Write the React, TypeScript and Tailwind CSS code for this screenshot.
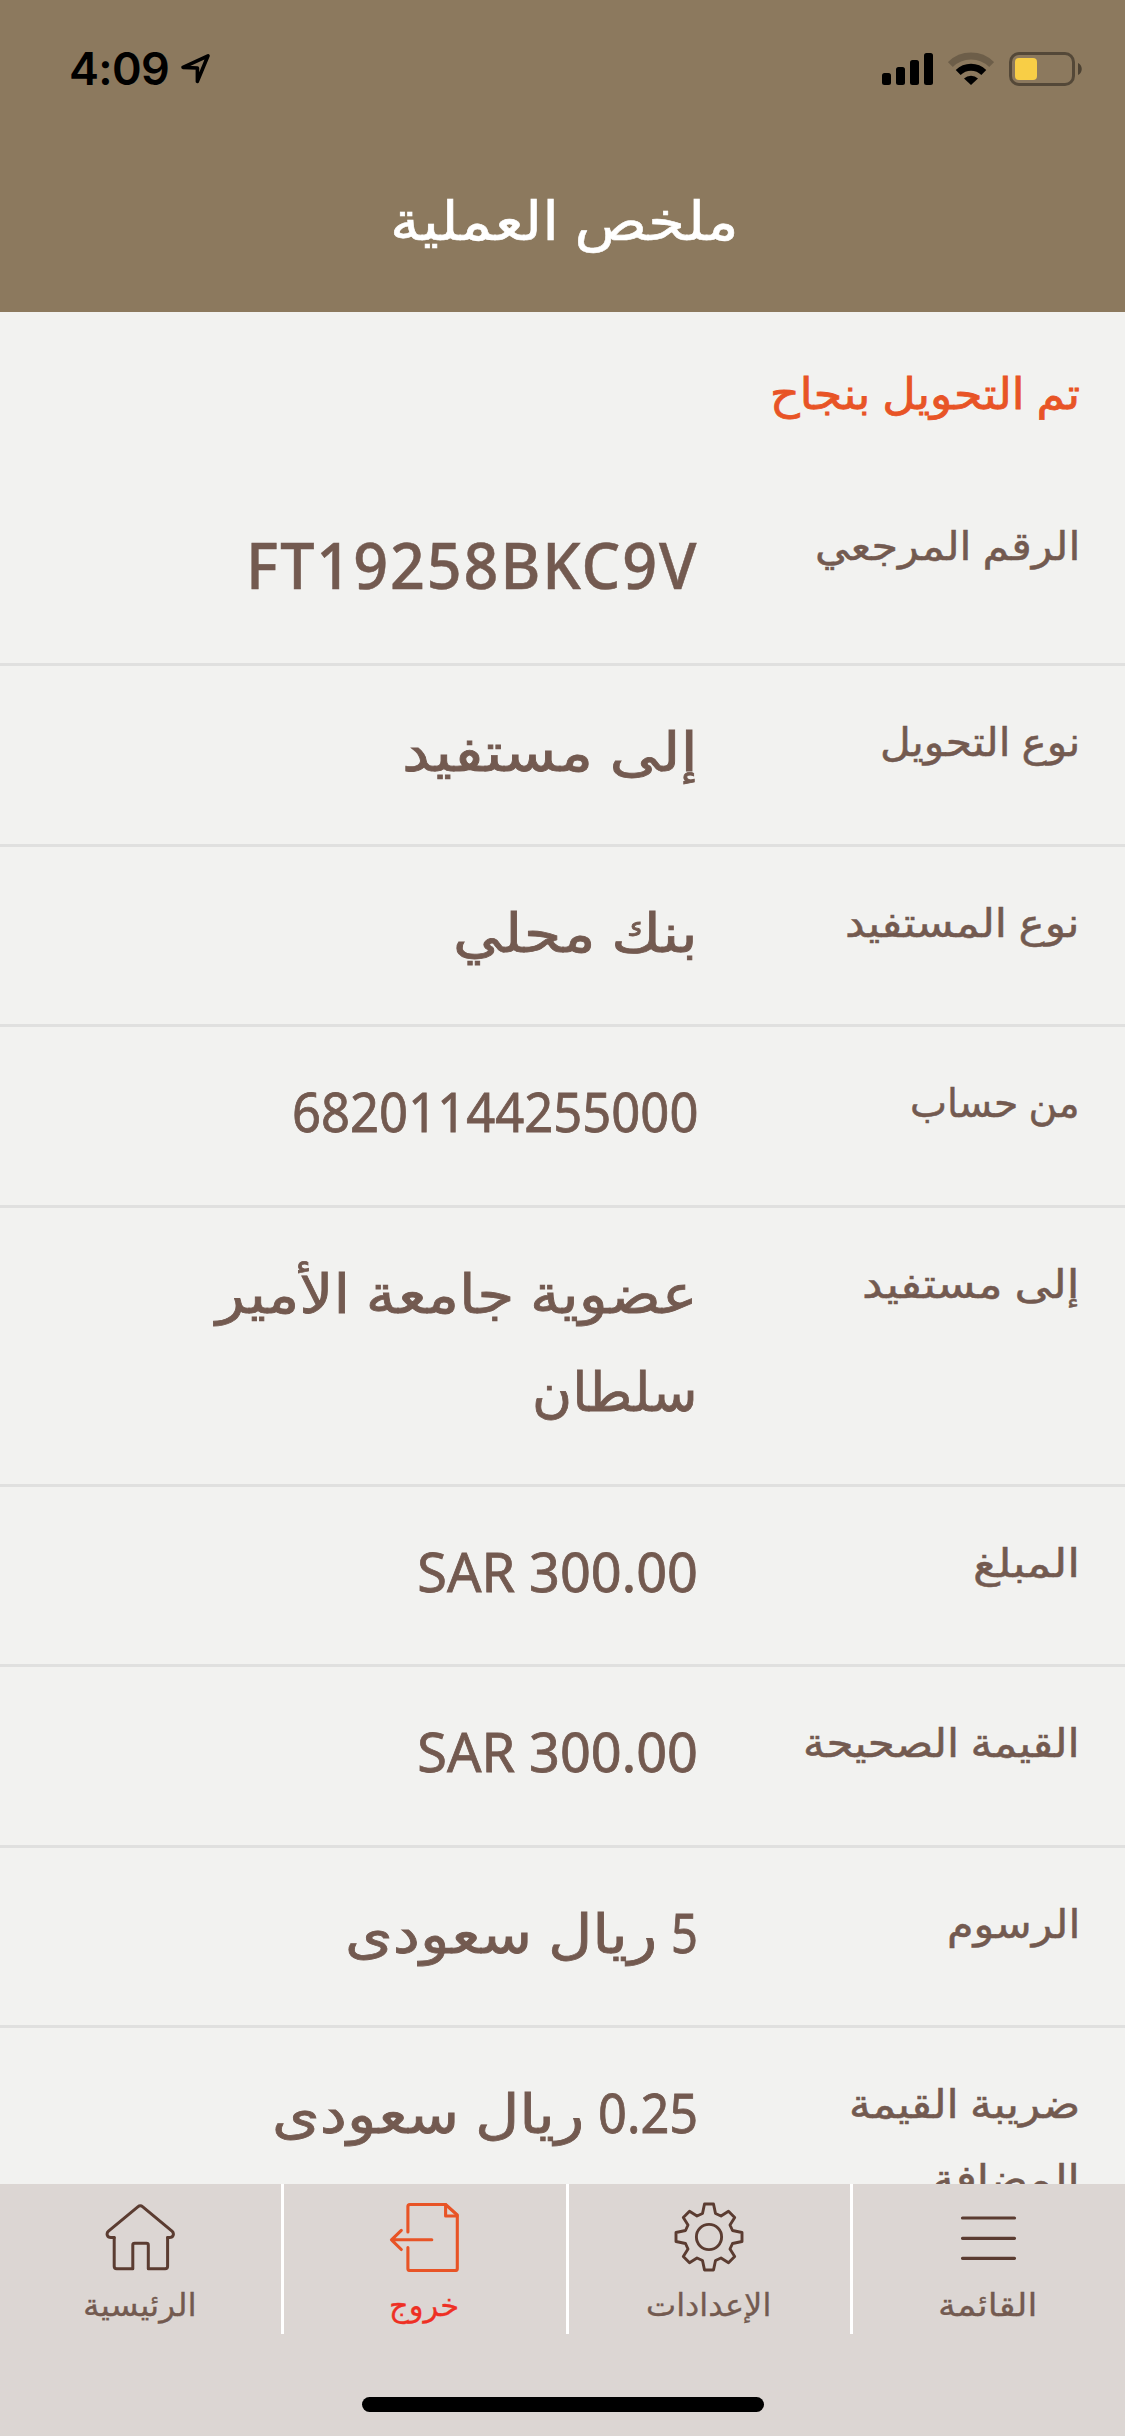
import { useLayoutEffect, useRef, useState } from 'react'
import type { ReactNode } from 'react'
import clsx from 'clsx'

type FitProps = {
  width: number
  className?: string
  children: ReactNode
}

// Condenses or widens one line of text so that it spans exactly `width`
function Fit({ width, className, children }: FitProps) {
  const ref = useRef<HTMLSpanElement>(null)
  const [scale, setScale] = useState(1)

  useLayoutEffect(() => {
    if (ref.current) setScale(width / ref.current.offsetWidth)
  }, [width])

  return (
    <span className={clsx('flex justify-start', className)} style={{ width }}>
      <span
        ref={ref}
        className="block shrink-0 origin-right whitespace-nowrap"
        style={{ transform: `scaleX(${scale})` }}
      >
        {children}
      </span>
    </span>
  )
}

type Line = { text: string; width: number; ltr?: boolean }

type Row = {
  label: Line[]
  value: Line[]
  className: string
  large?: boolean
  inline?: boolean
}

const rows: Row[] = [
  {
    label: [{ text: 'الرقم المرجعي', width: 265 }],
    value: [{ text: 'FT19258BKC9V', width: 452, ltr: true }],
    className: 'h-[196px]',
    large: true,
  },
  {
    label: [{ text: 'نوع التحويل', width: 200 }],
    value: [{ text: 'إلى مستفيد', width: 296 }],
    className: 'h-[181px]',
  },
  {
    label: [{ text: 'نوع المستفيد', width: 235 }],
    value: [{ text: 'بنك محلي', width: 245 }],
    className: 'h-[180px]',
  },
  {
    label: [{ text: 'من حساب', width: 170 }],
    value: [{ text: '68201144255000', width: 406, ltr: true }],
    className: 'h-[181px]',
  },
  {
    label: [{ text: 'إلى مستفيد', width: 218 }],
    value: [
      { text: 'عضوية جامعة الأمير', width: 482 },
      { text: 'سلطان', width: 166 },
    ],
    className: 'h-[279px]',
  },
  {
    label: [{ text: 'المبلغ', width: 107 }],
    value: [{ text: 'SAR 300.00', width: 281, ltr: true }],
    className: 'h-[180px]',
  },
  {
    label: [{ text: 'القيمة الصحيحة', width: 277 }],
    value: [{ text: 'SAR 300.00', width: 281, ltr: true }],
    className: 'h-[181px]',
  },
  {
    label: [{ text: 'الرسوم', width: 133 }],
    value: [
      { text: '5', width: 27, ltr: true },
      { text: 'ريال سعودى', width: 312 },
    ],
    className: 'h-[180px]',
    inline: true,
  },
  {
    label: [
      { text: 'ضريبة القيمة', width: 231 },
      { text: 'المضافة', width: 148 },
    ],
    value: [
      { text: '0.25', width: 100, ltr: true },
      { text: 'ريال سعودى', width: 312 },
    ],
    className: 'h-[255px]',
    inline: true,
  },
]

function LocationIcon() {
  return (
    <svg width="32" height="32" viewBox="0 0 32 32" fill="none" stroke="#000" strokeWidth="3.6" strokeLinejoin="round">
      <path d="M28 2.8 17.4 28.4V15L3 14.400Z" />
    </svg>
  )
}

function SignalIcon() {
  return (
    <svg width="51" height="34" viewBox="0 0 51 34">
      <rect x="0" y="21" width="9" height="12" rx="2.5" />
      <rect x="14" y="15" width="9" height="18" rx="2.5" />
      <rect x="28" y="8" width="9" height="25" rx="2.5" />
      <rect x="42" y="1" width="9" height="32" rx="2.5" />
    </svg>
  )
}

function WifiIcon() {
  return (
    <svg width="46" height="34" viewBox="0 0 46 34" fill="none" strokeWidth="7">
      <path d="M2.3 12.6a29.3 29.3 0 0 1 41.4 0" stroke="#000" strokeOpacity=".22" />
      <path d="M10.2 20.5a18.3 18.3 0 0 1 25.6 0" stroke="#000" />
      <path d="M23 33 16 26.5a10 10 0 0 1 14 0Z" fill="#000" />
    </svg>
  )
}

function BatteryIcon() {
  return (
    <svg width="74" height="34" viewBox="0 0 74 34" fill="none">
      <rect x="1.5" y="1.5" width="63" height="31" rx="8.5" stroke="#000" strokeOpacity=".4" strokeWidth="3" />
      <rect x="6" y="6" width="22" height="22" rx="4" fill="#f8ce46" />
      <path d="M69 11c5 2 5 10 0 12Z" fill="#000" fillOpacity=".45" />
    </svg>
  )
}

function MenuIcon() {
  return (
    <svg width="70" height="70" viewBox="0 0 70 70" fill="none" stroke="#5b3c31" strokeWidth="3.2" strokeLinecap="round">
      <path d="M9.5 16H61.5M9.5 36.3H61.5M9.5 56.3H61.5" />
    </svg>
  )
}

function GearIcon() {
  return (
    <svg width="70" height="70" viewBox="0 0 70 70" fill="none" stroke="#5b3c31" strokeWidth="2.9" strokeLinejoin="round">
      <path d="M30.5 2H39.5L41.5 11.5 47 14 54.5 9.3 60.7 15.5 56 23 58.5 28.5 68 30.5V39.5L58.5 41.5 56 47 60.7 54.5 54.5 60.7 47 56 41.5 58.5 39.5 68H30.5L28.5 58.5 23 56 15.5 60.7 9.3 54.5 14 47 11.5 41.5 2 39.5V30.5L11.5 28.5 14 23 9.3 15.5 15.5 9.3 23 14 28.5 11.5Z" />
      <circle cx="35" cy="35" r="12.6" />
    </svg>
  )
}

function ExitIcon() {
  return (
    <svg width="70" height="70" viewBox="0 0 70 70" fill="none" stroke="#e85426" strokeWidth="3.1" strokeLinecap="round" strokeLinejoin="round">
      <path d="M18.9 30V4.5q0-2 2-2H56.6L68.3 13V66.5q0 2-2 2H20.9q-2 0-2-2V45.5" />
      <path d="M56.6 2.5V14H68" />
      <path d="M42.8 37.8H2.5M12.3 28.3 2.5 37.8 12.3 47.5" />
    </svg>
  )
}

function HomeIcon() {
  return (
    <svg width="70" height="70" viewBox="0 0 70 70" fill="none" stroke="#5b3c31" strokeWidth="3" strokeLinecap="round" strokeLinejoin="round">
      <path d="M9.2 35.5H6C2 35.5 1 31.5 3.5 29.2L32.8 4.8Q35.3 2.8 37.8 4.8L67 29.2C69.5 31.5 68.5 35.5 64.5 35.5H62.6" />
      <path d="M9.2 35.5V64.3Q9.2 66.8 11.7 66.8H27.8V43.1Q27.8 41.3 29.6 41.3H41.5Q43.3 41.3 43.3 43.1V66.8H60.1Q62.6 66.8 62.6 64.3V35.5" />
    </svg>
  )
}

const tabs = [
  { label: 'القائمة', width: 99, icon: <MenuIcon />, className: 'w-[275px] border-l-[3px] text-[#735a50]' },
  { label: 'الإعدادات', width: 125, icon: <GearIcon />, className: 'w-[284px] border-l-[3px] text-[#735a50]' },
  { label: 'خروج', width: 70, icon: <ExitIcon />, className: 'w-[285px] border-l-[3px] text-[#ee3024]' },
  { label: 'الرئيسية', width: 114, icon: <HomeIcon />, className: 'w-[281px] text-[#735a50]' },
]

function Lines({ lines }: { lines: Line[] }) {
  return (
    <>
      {lines.map((line) => (
        <Fit key={line.text} width={line.width}>
          <span dir={line.ltr ? 'ltr' : 'rtl'}>{line.text}</span>
        </Fit>
      ))}
    </>
  )
}

export default function App() {
  return (
    <div
      dir="rtl"
      className="flex h-[2436px] w-[1125px] flex-col overflow-hidden bg-[#f2f2f0] font-['Noto_Sans','DejaVu_Sans',sans-serif] text-[#735a50]"
    >
      <header className="h-[312px] shrink-0 bg-[#8c795e]">
        <div dir="ltr" className="flex h-[138px] items-center justify-between pl-[69px] pr-[42px]">
          <div className="flex items-center gap-[9px]">
            <span className="w-[102px] whitespace-nowrap font-['Inter',sans-serif] text-[45px] font-semibold leading-[60px] tracking-[-0.7px] text-black">
              4:09
            </span>
            <LocationIcon />
          </div>
          <div className="flex items-center">
            <SignalIcon />
            <span className="mx-[15px]">
              <WifiIcon />
            </span>
            <BatteryIcon />
          </div>
        </div>
        <h1 className="flex justify-center pl-[4px] pt-[41px] text-[54px] font-normal leading-[80px] text-white [-webkit-text-stroke:0.6px]">
          <Fit width={349}>ملخص العملية</Fit>
        </h1>
      </header>

      <main className="min-h-0 flex-1 overflow-hidden">
        <p className="h-[158px] pr-[45px] pt-[45px] text-[43px] leading-[72px] text-[#e85426] [-webkit-text-stroke:0.8px]">
          <Fit width={310}>تم التحويل بنجاح</Fit>
        </p>
        {rows.map((row, i) => (
          <div key={i} className={clsx('flex border-b-[3px] border-[#e0e0df] pr-[45px]', row.className)}>
            <div className="w-[382px] shrink-0 pt-[37px] text-[40px] leading-[75px] [-webkit-text-stroke:0.5px]">
              <Lines lines={row.label} />
            </div>
            <div
              className={clsx(
                'leading-[98px]',
                row.inline && 'flex gap-[14px]',
                row.large
                  ? 'pt-[46px] text-[63px] font-medium tracking-[2px] [-webkit-text-stroke:0.5px]'
                  : 'pt-[35px] text-[54px] [-webkit-text-stroke:0.8px]',
              )}
            >
              <Lines lines={row.value} />
            </div>
          </div>
        ))}
      </main>

      <footer className="flex h-[252px] shrink-0 flex-col items-center justify-between bg-[#dcd6d3] pb-[24px]">
        <nav className="flex h-[150px] w-full">
          {tabs.map((tab) => (
            <button
              key={tab.label}
              type="button"
              className={clsx('flex flex-col items-center border-white pr-[2px] pt-[18px]', tab.className)}
            >
              {tab.icon}
              <span className="mt-[7px] text-[31px] leading-[50px] [-webkit-text-stroke:0.3px]">
                <Fit width={tab.width}>{tab.label}</Fit>
              </span>
            </button>
          ))}
        </nav>
        <div className="h-[15px] w-[402px] rounded-full bg-black" />
      </footer>
    </div>
  )
}
